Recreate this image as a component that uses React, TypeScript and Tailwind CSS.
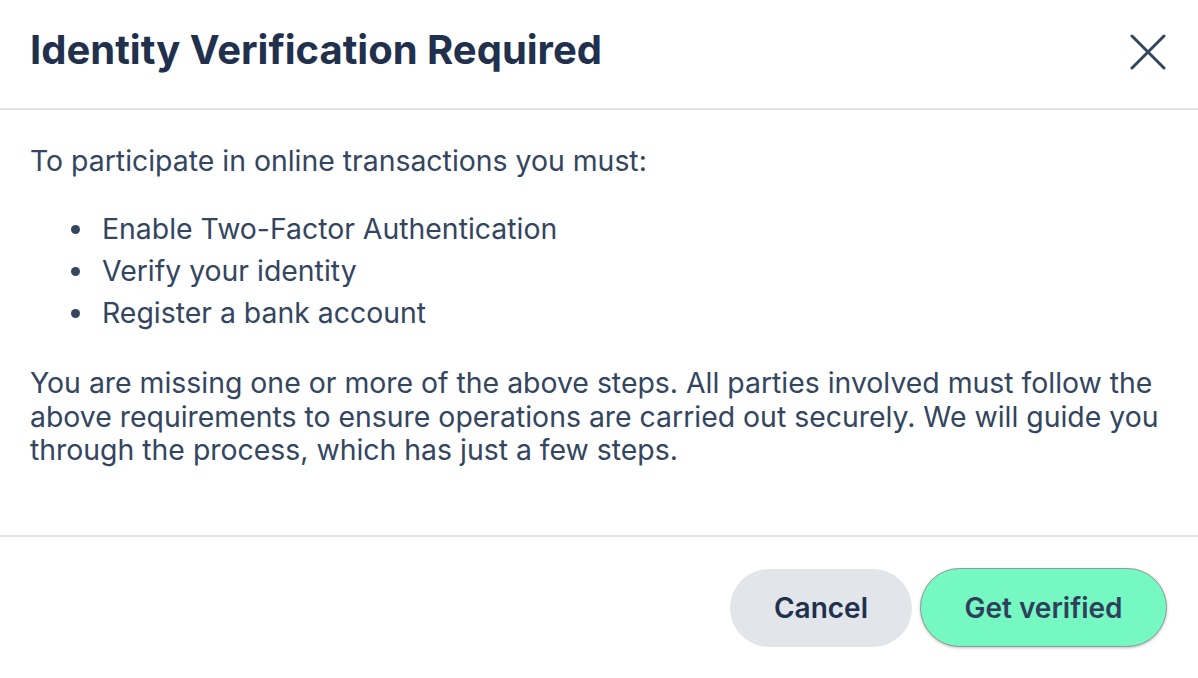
const steps = [
  "Enable Two-Factor Authentication",
  "Verify your identity",
  "Register a bank account",
];

function CloseIcon() {
  return (
    <svg width="36" height="36" viewBox="0 0 36 36" fill="none" stroke="currentColor" strokeWidth="3" strokeLinecap="round">
      <path d="M2 2L34 34M34 2L2 34" />
    </svg>
  );
}

export default function App() {
  return (
    <div
      className="flex h-[678px] w-[1198px] flex-col bg-white text-[#334560]"
      style={{ fontFamily: "Inter, 'Noto Sans', sans-serif" }}
    >
      <header className="flex h-[110px] items-center justify-between border-b-2 border-[#dfe3e8] pb-[8px] pl-[30px] pr-[32px]">
        <h1 className="text-[40px] font-bold leading-[48px] text-[#21304c]">
          Identity Verification Required
        </h1>
        <button className="flex items-center justify-center pt-[4px] text-[#33455f]">
          <CloseIcon />
        </button>
      </header>

      <main className="flex-1 px-[30px] pt-[34px] text-[28.4px] leading-[34px]">
        <p>To participate in online transactions you must:</p>
        <ul className="mt-[34px] flex flex-col gap-[8px] pl-[72px]">
          {steps.map((s) => (
            <li key={s} className="relative">
              <span className="absolute left-[-31px] top-[13px] h-[9px] w-[9px] rounded-full bg-[#33455f]" />
              {s}
            </li>
          ))}
        </ul>
        <p className="mt-[36px] leading-[33.5px]">
          You are missing one or more of the above steps. All parties involved must follow the
          above requirements to ensure operations are carried out securely. We will guide you
          through the process, which has just a few steps.
        </p>
      </main>

      <footer className="flex h-[143px] items-center justify-end gap-[8px] border-t-2 border-[#dfe3e8] pr-[31px]">
        <button className="h-[78px] w-[182px] rounded-full bg-[#e2e5ea] text-[28px] font-semibold text-[#21304c]">
          Cancel
        </button>
        <button className="h-[79px] w-[247px] rounded-full border border-[#8d9a95] bg-[#75f8c2] text-[28px] font-semibold text-[#2f3f5c] shadow-[0_1px_3px_rgba(0,0,0,0.25)]">
          Get verified
        </button>
      </footer>
    </div>
  );
}
